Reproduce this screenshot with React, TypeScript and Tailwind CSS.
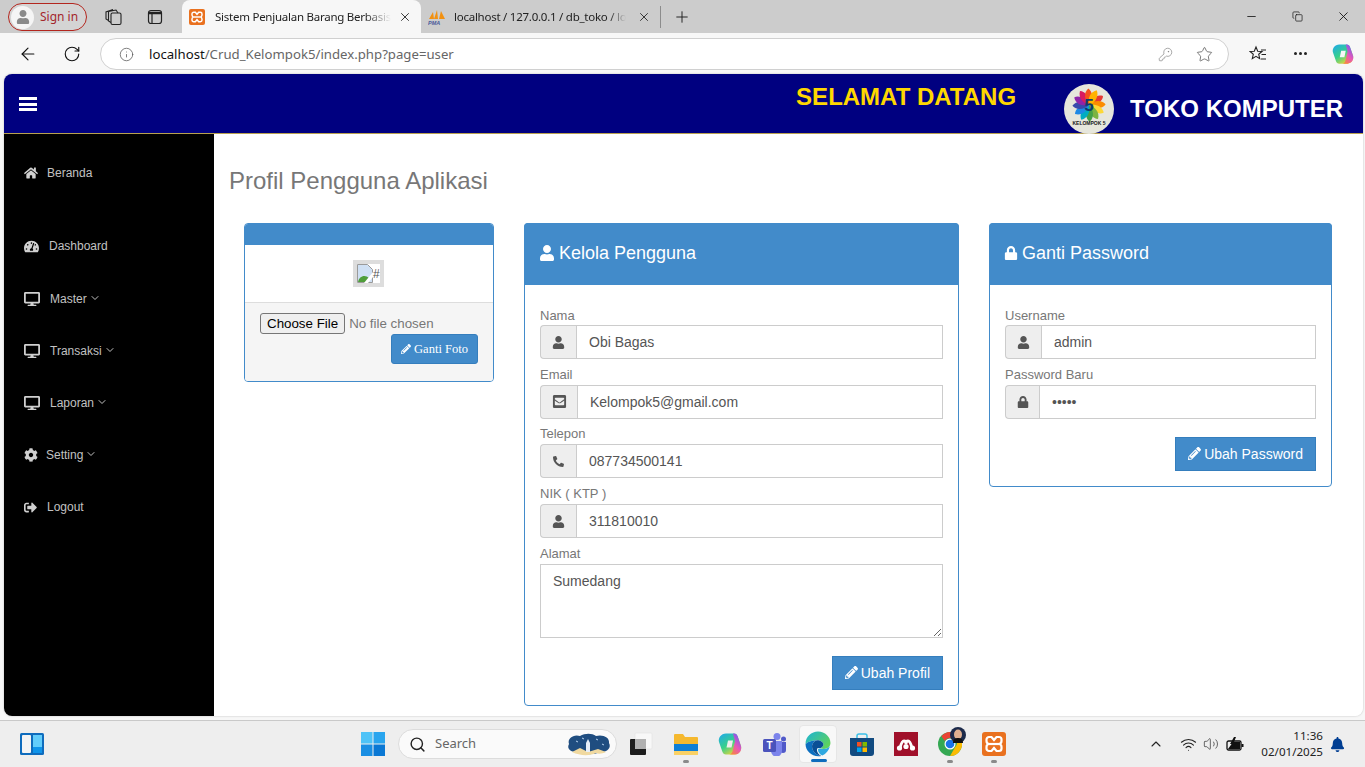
import React from "react";
import {
  ArrowLeft,
  ChevronDown,
  ChevronUp,
  Copy,
  Info,
  KeyRound,
  Minus,
  Plus,
  RotateCw,
  Search,
  Star,
  Volume2,
  Wifi,
  X,
} from "lucide-react";
import {
  FaBell,
  FaCog,
  FaDesktop,
  FaEnvelopeSquare,
  FaHome,
  FaLock,
  FaPencilAlt,
  FaPhone,
  FaSignOutAlt,
  FaTachometerAlt,
  FaUser,
} from "react-icons/fa";

const XamppIcon = ({ size }: { size: number }) => (
  <svg width={size} height={size} viewBox="0 0 24 24">
    <rect width="24" height="24" rx="3" fill="#e9711f" />
    <path
      d="M7 5h2.500L12 8l2.500-3H17a2.500 2.500 0 0 1 2.500 2.500v1.500A3 3 0 0 1 17 12a3 3 0 0 1 2.500 3v1.500A2.500 2.500 0 0 1 17 19h-2.500L12 16l-2.500 3H7a2.500 2.500 0 0 1-2.500-2.500V15A3 3 0 0 1 7 12a3 3 0 0 1-2.500-3V7.500A2.500 2.500 0 0 1 7 5z"
      fill="none"
      stroke="#fff"
      strokeWidth="2.200"
    />
    <path d="M7 12h10" stroke="#fff" strokeWidth="2.200" />
  </svg>
);

const PmaIcon = () => (
  <svg width="18" height="16" viewBox="0 0 18 16">
    <path d="M1 10 5 3l1 7zM6 10l3-9 1 9zM11 10l2-8 4 8z" fill="#f29111" />
    <text x="0" y="15.500" fontSize="5.500" fontWeight="700" fontStyle="italic" fill="#4a5a9a" fontFamily="Liberation Sans, sans-serif">
      PMA
    </text>
  </svg>
);

const CopilotIcon = ({ size, id }: { size: number; id: string }) => (
  <svg width={size} height={size} viewBox="0 0 24 24">
    <defs>
      <linearGradient id={`${id}a`} x1="0" y1="0" x2="0.700" y2="1">
        <stop offset="0" stopColor="#1fa8ee" />
        <stop offset="0.550" stopColor="#37d08a" />
        <stop offset="1" stopColor="#f6d535" />
      </linearGradient>
      <linearGradient id={`${id}b`} x1="0.800" y1="0" x2="0.200" y2="1">
        <stop offset="0" stopColor="#6f5cf2" />
        <stop offset="0.550" stopColor="#e957b6" />
        <stop offset="1" stopColor="#f78a3a" />
      </linearGradient>
    </defs>
    <path
      fillRule="evenodd"
      d="M8 1.500h8c2 0 3 1 3.700 3L23 14c1 4-1.500 8.500-6 8.500H8c-2 0-3-1-3.700-3L1 10C0 6 3 1.500 8 1.500zM10 8.500h5l-1.500 7h-5z"
      fill={`url(#${id}a)`}
    />
    <path d="M15 1.500h1c2 0 3 1 3.700 3L23 14c1 4-1.500 8.500-6 8.500h-6c2 0 3-1.500 3.500-3L17 9.500z" fill={`url(#${id}b)`} />
  </svg>
);

const EdgeIcon = () => (
  <svg width="26" height="26" viewBox="0 0 24 24">
    <defs>
      <linearGradient id="eda" x1="0" y1="0" x2="1" y2="0.700">
        <stop offset="0" stopColor="#1bb3d8" />
        <stop offset="1" stopColor="#5fd35a" />
      </linearGradient>
    </defs>
    <path d="M.5 12C.5 5 6 .5 12 .5c6.500 0 11.500 5 11.500 10.500 0 3.500-3 5.500-6 5.500-2 0-3.500-.5-3.500-.5 2-1 3-2 3-3.500 0-2.500-3-4-5.500-4C7 8.500 3 9.500.5 12z" fill="url(#eda)" />
    <path d="M.5 12C3 9.500 7 8.500 11.500 8.500c-3 .5-5 3-5 6 0 4 3.500 7.500 8.500 8.500C7 24.500.5 19 .5 12z" fill="#0c6fc0" />
    <path d="M6.500 14.500c0-3 2-5.500 5-6 2.500 0 5.500 1.500 5.500 4 0 1.500-1 2.500-3 3.500 0 0-3-1-3 1.500 0 2 1.500 4 4 5.500-5-1-8.500-4.500-8.500-8.500z" fill="#0a4f96" />
    <path d="M17 16.500c2 0 4-.5 6-2.500-1 4-3.500 7-7 8.500-2.500-1-4-3-4-5 0-2.500 3-1 5-1z" fill="#2fa8e0" />
  </svg>
);

const ChromeIcon = () => (
  <svg width="24" height="24" viewBox="0 0 24 24">
    <circle cx="12" cy="12" r="12" fill="#34a853" />
    <path d="M12 0a12 12 0 0 1 10.400 6H12a6 6 0 0 0-5.200 3L3.400 4.300A12 12 0 0 1 12 0z" fill="#ea4335" />
    <path d="M22.400 6A12 12 0 0 1 12 24l5.200-9A6 6 0 0 0 17 6z" fill="#fbbc04" />
    <circle cx="12" cy="12" r="5.500" fill="#fff" />
    <circle cx="12" cy="12" r="4.300" fill="#1a73e8" />
  </svg>
);

const LogoKelompok = () => {
  const colors = ["#e53935", "#fb8c00", "#fdd835", "#7cb342", "#43a047", "#00acc1", "#1e88e5", "#3949ab", "#8e24aa", "#d81b60", "#f4511e", "#ffb300"];
  return (
    <svg width="50" height="50" viewBox="0 0 50 50" className="shrink-0">
      <circle cx="25" cy="25" r="25" fill="#e6e6dc" />
      <g transform="translate(25 21)">
        {colors.map((c, i) => (
          <path key={c} d="M0 0C2-6 7-11 14-9 14-4 7 2 0 0z" fill={c} transform={`rotate(${i * 30})`} />
        ))}
      </g>
      <text x="25" y="27" textAnchor="middle" fontSize="17" fontWeight="700" fill="#0d3c6e" fontFamily="Liberation Sans, sans-serif">
        5
      </text>
      <text x="25" y="41" textAnchor="middle" fontSize="5" fontWeight="700" fill="#1a1a1a" fontFamily="Liberation Sans, sans-serif">
        KELOMPOK 5
      </text>
    </svg>
  );
};

const TabStrip = () => (
  <div className="h-[33px] bg-[#cccccc] flex items-end font-['Noto_Sans',sans-serif] text-xs shrink-0">
    <div className="self-start mt-[3px] ml-[8px] w-[79px] h-[28px] rounded-full border border-[#b3261e] flex items-center gap-[6px] px-[2px] bg-[#d4d4d4]">
      <div className="w-[23px] h-[23px] rounded-full bg-[#f5f5f5] flex items-center justify-center">
        <FaUser className="text-[#8a8a8a] text-[14px]" />
      </div>
      <span className="text-[#a4262c]">Sign in</span>
    </div>
    <div className="self-center w-[52px] flex justify-center">
      <svg width="18" height="18" viewBox="0 0 18 18" fill="none" stroke="#222" strokeWidth="1.100">
        <rect x="7" y="5" width="10" height="11.500" rx="1.500" />
        <path d="M7 14.500 4.500 13V3.500L12 2l2 3M4.500 12.500 2 11V4l7-2.500" />
      </svg>
    </div>
    <div className="self-center w-[32px] flex justify-center">
      <svg width="16" height="16" viewBox="0 0 16 16" fill="none" stroke="#222" strokeWidth="1.200">
        <rect x="1.500" y="1.500" width="13" height="13" rx="2.500" />
        <path d="M1.500 4h13" strokeWidth="2.500" />
        <path d="M5 4v10" />
      </svg>
    </div>
    <div className="ml-[11px] w-[239px] h-[33px] bg-[#f7f7f7] rounded-t-lg flex items-center pl-[7px] pr-[9px]">
      <XamppIcon size={16} />
      <span className="ml-[10px] whitespace-nowrap text-[11.500px] tracking-[-0.250px] text-[#222] [mask-image:linear-gradient(to_right,black_85%,transparent)]">
        Sistem Penjualan Barang Berbasis
      </span>
      <X size={14} strokeWidth={1.500} className="ml-auto text-[#222]" />
    </div>
    <div className="ml-[7px] w-[232px] h-[33px] flex items-center pr-[9px]">
      <PmaIcon />
      <span className="ml-[8px] whitespace-nowrap text-[11.500px] tracking-[-0.250px] text-[#222] [mask-image:linear-gradient(to_right,black_90%,transparent)]">
        localhost / 127.0.0.1 / db_toko / lo
      </span>
      <X size={14} strokeWidth={1.500} className="ml-auto text-[#222]" />
    </div>
    <div className="self-center h-[22px] w-px bg-[#8c8c8c]" />
    <Plus size={18} strokeWidth={1.300} className="self-center ml-[12px] text-[#222]" />
    <div className="ml-auto self-center flex items-center text-[#111]">
      <span className="w-[46px] flex justify-center"><Minus size={13} strokeWidth={1.500} /></span>
      <span className="w-[46px] flex justify-center"><Copy size={11} strokeWidth={1.500} /></span>
      <span className="w-[46px] flex justify-center mr-[-1px]"><X size={15} strokeWidth={1.400} /></span>
    </div>
  </div>
);

const AddressBar = () => (
  <div className="h-[41px] bg-[#f7f7f7] flex items-center font-['Noto_Sans',sans-serif] shrink-0">
    <ArrowLeft size={20} strokeWidth={1.400} className="ml-[18px] text-[#111]" />
    <RotateCw size={18} strokeWidth={1.500} className="ml-[25px] text-[#111]" />
    <div className="ml-[19px] mt-[1px] w-[1129px] h-[32px] rounded-full bg-white border border-[#d0d0d0] flex items-center pl-[18px] pr-[15px]">
      <Info size={15} strokeWidth={1.200} className="text-[#555]" />
      <span className="ml-[15px] mt-[1px] text-[13.200px] text-[#666]">
        <span className="text-[#111]">localhost</span>/Crud_Kelompok5/index.php?page=user
      </span>
      <KeyRound size={15} strokeWidth={1} className="ml-auto text-[#777]" />
      <Star size={17} strokeWidth={1.100} className="ml-[23px] text-[#555]" />
    </div>
    <svg width="18" height="18" viewBox="0 0 18 18" className="ml-[20px]" fill="none" stroke="#222" strokeWidth="1.100">
      <path d="M7 2l1.700 4.200 4.300.3-3.300 2.800 1 4.300L7 11.300 3.300 13.600l1-4.300L1 6.500l4.300-.3z" />
      <path d="M12 5h5M12.500 9.500H17M12 14h5" />
    </svg>
    <span className="ml-[27px] flex gap-[2px]">
      <i className="w-[3px] h-[3px] rounded-full bg-[#222]" />
      <i className="w-[3px] h-[3px] rounded-full bg-[#222]" />
      <i className="w-[3px] h-[3px] rounded-full bg-[#222]" />
    </span>
    <span className="ml-[25px] mt-[1px]"><CopilotIcon size={22} id="cpt" /></span>
  </div>
);

const NavItem = ({ icon, label, gap, caret, className }: { icon: React.ReactNode; label: string; gap: string; caret?: boolean; className?: string }) => (
  <div className={`h-[52px] pl-[20px] flex items-center text-xs text-[#c2c2c2] ${className ?? ""}`}>
    <span className="text-[#d0d0d0] shrink-0">{icon}</span>
    <span className={gap}>{label}</span>
    {caret && <ChevronDown size={12} strokeWidth={2} className="ml-[2px] mt-[-2px]" />}
  </div>
);

const Sidebar = () => (
  <aside className="w-[210px] bg-black pt-[13px] shrink-0">
    <NavItem icon={<FaHome size={14} />} label="Beranda" gap="ml-[9px]" className="mb-[21px]" />
    <NavItem icon={<FaTachometerAlt size={15} />} label="Dashboard" gap="ml-[10px]" className="mb-px" />
    <NavItem icon={<FaDesktop size={16} />} label="Master" gap="ml-[10px]" caret />
    <NavItem icon={<FaDesktop size={16} />} label="Transaksi" gap="ml-[10px]" caret />
    <NavItem icon={<FaDesktop size={16} />} label="Laporan" gap="ml-[10px]" caret />
    <NavItem icon={<FaCog size={14} />} label="Setting" gap="ml-[8px]" caret />
    <NavItem icon={<FaSignOutAlt size={13} />} label="Logout" gap="ml-[10px]" />
  </aside>
);

const Field = ({ label, icon, value, addonWidth, type = "text", first }: { label: string; icon: React.ReactNode; value: string; addonWidth: string; type?: string; first?: boolean }) => (
  <div className={first ? "" : "mt-[5.700px]"}>
    <label className={`block h-[20px] text-[13px] text-[#777] ${first ? "leading-[21px]" : "leading-[19px]"}`}>{label}</label>
    <div className="flex h-[34px]">
      <span className={`${addonWidth} shrink-0 flex items-center justify-center bg-[#eeeeee] border border-[#cccccc] border-r-0 rounded-l text-[#555] text-sm`}>
        {icon}
      </span>
      <input
        type={type}
        defaultValue={value}
        className="flex-1 min-w-0 border border-[#cccccc] bg-white px-[12px] text-sm text-[#555] outline-none"
      />
    </div>
  </div>
);

const CardHeader = ({ icon, title }: { icon: React.ReactNode; title: string }) => (
  <div className="h-[62px] bg-[#428bca] mx-[-1px] mt-[-1px] pb-[2px] rounded-t flex items-center pl-[15px] text-lg text-white gap-[4px]">
    {icon}
    <span>{title}</span>
  </div>
);

const SaveButton = ({ label }: { label: string }) => (
  <div className="flex justify-end mt-[18px]">
    <button className="h-[34px] px-[12px] bg-[#428bca] border border-[#357ebd] text-sm text-white flex items-center gap-[3px]">
      <FaPencilAlt size={13} />
      {label}
    </button>
  </div>
);

const PhotoCard = () => (
  <section className="w-[250px] h-[159px] shrink-0 border border-[#428bca] rounded flex flex-col overflow-hidden">
    <div className="h-[21px] bg-[#428bca]" />
    <div className="h-[57px] flex items-center justify-center pr-[1px]">
      <div className="w-[31px] h-[27px] bg-[#dddddd] p-[4px]">
        <div className="h-full bg-white flex items-center overflow-hidden">
          <svg width="16" height="19" viewBox="0 0 16 19" className="shrink-0">
            <path d="M.5.5h10l5 5v13H.5z" fill="#cfe0f4" stroke="#9a9a9a" />
            <path d="M1 18c1-6 7-8 11-4l-3 4z" fill="#4f9e3a" />
            <path d="M16 8 7 19h4l5-6z" fill="#fff" />
          </svg>
          <span className="text-[12px] leading-none text-[#555]">#</span>
        </div>
      </div>
    </div>
    <div className="flex-1 bg-[#f5f5f5] border-t border-[#dddddd] pt-[10px] pl-[15px] pr-[15px]">
      <input
        type="file"
        className="block w-full h-[21px] text-[13.330px] text-[#777] file:text-black file:bg-[#efefef] file:border file:border-solid file:border-[#767676] file:rounded-[3px] file:h-[21px] file:px-[6px] file:mr-[4px]"
      />
      <div className="flex justify-end">
        <button className="w-[87px] h-[30px] bg-[#428bca] border border-[#357ebd] rounded-[3px] text-white text-[12.500px] font-['Liberation_Serif',serif] flex items-center justify-center gap-[3px]">
          <FaPencilAlt size={10} />
          Ganti Foto
        </button>
      </div>
    </div>
  </section>
);

const ProfileCard = () => (
  <section className="w-[435px] shrink-0 self-start border border-[#428bca] rounded">
    <CardHeader icon={<FaUser size={16} />} title="Kelola Pengguna" />
    <div className="px-[15px] pt-[20px] pb-[15px]">
      <Field first label="Nama" icon={<FaUser size={13} />} value="Obi Bagas" addonWidth="w-[36px]" />
      <Field label="Email" icon={<FaEnvelopeSquare size={15} />} value="Kelompok5@gmail.com" addonWidth="w-[37px]" />
      <Field label="Telepon" icon={<FaPhone size={11} className="scale-x-[-1]" />} value="087734500141" addonWidth="w-[36px]" />
      <Field label="NIK ( KTP )" icon={<FaUser size={13} />} value="311810010" addonWidth="w-[36px]" />
      <div className="mt-[5.700px]">
        <label className="block h-[20px] leading-[19px] text-[13px] text-[#777]">Alamat</label>
        <textarea
          defaultValue="Sumedang"
          className="block w-full h-[74px] border border-[#cccccc] px-[12px] py-[6px] text-sm leading-[20px] text-[#555] outline-none"
        />
      </div>
      <SaveButton label="Ubah Profil" />
    </div>
  </section>
);

const PasswordCard = () => (
  <section className="w-[343px] shrink-0 self-start border border-[#428bca] rounded">
    <CardHeader icon={<FaLock size={14} />} title="Ganti Password" />
    <div className="px-[15px] pt-[20px] pb-[15px]">
      <Field first label="Username" icon={<FaUser size={13} />} value="admin" addonWidth="w-[36px]" />
      <Field label="Password Baru" icon={<FaLock size={12} />} value="admin" addonWidth="w-[34px]" type="password" />
      <SaveButton label="Ubah Password" />
    </div>
  </section>
);

const SiteFrame = () => (
  <div className="flex-1 min-h-0 pl-[4px] pr-[2px] pb-[4px] bg-[#f7f7f7]">
    <div className="h-full rounded-lg overflow-hidden flex flex-col font-['Liberation_Sans',Arial,sans-serif] shadow-[0_0_2px_rgba(0,0,0,0.25)]">
      <header className="h-[60px] bg-[#000080] border-b border-[#b8a050] flex items-start shrink-0">
        <div className="ml-[15px] mt-[23px] w-[18px] flex flex-col gap-[2.500px]">
          <i className="block h-[3px] bg-white" />
          <i className="block h-[3px] bg-white" />
          <i className="block h-[3px] bg-white" />
        </div>
        <div className="ml-auto mt-[9px] mr-[48px] text-2xl leading-[28px] font-bold text-[#ffd700]">SELAMAT DATANG</div>
        <div className="mt-[10px]"><LogoKelompok /></div>
        <div className="ml-[16px] mr-[20px] mt-[21px] text-2xl leading-[28px] font-bold text-white">TOKO KOMPUTER</div>
      </header>
      <div className="flex-1 min-h-0 flex">
        <Sidebar />
        <main className="flex-1 min-w-0 bg-white px-[15px] overflow-hidden">
          <h1 className="pt-[34px] h-[89px] text-2xl leading-[26px] text-[#777]">Profil Pengguna Aplikasi</h1>
          <div className="flex gap-[30px] pl-[15px]">
            <PhotoCard />
            <ProfileCard />
            <PasswordCard />
          </div>
        </main>
      </div>
    </div>
  </div>
);

const TaskItem = ({ children, dot }: { children: React.ReactNode; dot?: boolean }) => (
  <div className="relative w-[44px] h-[46px] flex items-center justify-center shrink-0">
    {children}
    {dot && <span className="absolute bottom-[4px] left-[19px] w-[6px] h-[3px] rounded-full bg-[#8a8a8a]" />}
  </div>
);

const Taskbar = () => (
  <footer className="h-[47px] bg-[#eeeeee] border-t border-[#c9c9c9] flex items-center font-['Noto_Sans',sans-serif] shrink-0">
    <svg width="24" height="22" viewBox="0 0 24 22" className="ml-[20px] shrink-0">
      <rect width="24" height="22" rx="1.500" fill="#0f6cbd" />
      <rect x="2" y="2" width="9" height="18" rx="1" fill="#f4f4f4" />
      <rect x="13" y="2" width="9" height="12" fill="#62cdfb" />
      <rect x="13" y="14" width="9" height="6" fill="#0f94ea" />
    </svg>
    <svg width="24" height="24" viewBox="0 0 24 24" className="ml-[317px] shrink-0">
      <rect x="0" y="0" width="11.500" height="11.500" fill="#4fc3f7" />
      <rect x="12.500" y="0" width="11.500" height="11.500" fill="#29a5ee" />
      <rect x="0" y="12.500" width="11.500" height="11.500" fill="#1a8fe3" />
      <rect x="12.500" y="12.500" width="11.500" height="11.500" fill="#0a78d4" />
    </svg>
    <div className="ml-[13px] w-[219px] h-[30px] rounded-full bg-[#fafafa] border border-[#dcdcdc] flex items-center pl-[10px] pr-[4px] shrink-0">
      <Search size={17} strokeWidth={2} className="text-[#222]" />
      <span className="ml-[9px] text-[13px] text-[#666]">Search</span>
      <svg width="46" height="24" viewBox="0 0 46 24" className="ml-auto">
        <path d="M3 12C1 6 8 2 14 4c5-3 12-3 16 0 6-2 14 1 13 7 3 5-3 10-9 9-6 3-16 3-22 0C6 21 0 17 3 12z" fill="#1f4d80" />
        <path d="M6 20l8-4 8 4 10-3 8 3c-4 2-8 2-10 1-6 3-16 3-24-1z" fill="#f0d9a0" />
        <path d="M20 20v-9l2-4 2 4v9z" fill="#e6eef8" />
        <path d="M30 7l2 1M10 9l2 1M36 12l2 1M16 6l2 1" stroke="#b8d4f0" />
      </svg>
    </div>
    <div className="ml-[3px] flex items-center shrink-0">
      <TaskItem>
        <svg width="24" height="24" viewBox="0 0 24 24" className="ml-[-2px]">
          <rect x="6" y="1" width="17" height="16" rx="1" fill="#f8f8f8" stroke="#ddd" strokeWidth="0.500" />
          <rect x="1" y="7" width="16" height="16" rx="1" fill="#1c1c1c" />
          <rect x="6" y="7" width="11" height="10" fill="#b0b0b0" />
        </svg>
      </TaskItem>
      <TaskItem dot>
        <svg width="24" height="22" viewBox="0 0 24 22">
          <path d="M0 2a1 1 0 0 1 1-1h8l2 3h12a1 1 0 0 1 1 1v16H0z" fill="#f5b82e" />
          <rect x="0" y="11" width="24" height="7" fill="#0f7fd6" />
          <rect x="0" y="18" width="24" height="4" fill="#fad165" />
        </svg>
      </TaskItem>
      <TaskItem><CopilotIcon size={24} id="cpb" /></TaskItem>
      <TaskItem>
        <svg width="25" height="24" viewBox="0 0 25 24">
          <circle cx="15" cy="4.500" r="3.500" fill="#7b83eb" />
          <circle cx="21.500" cy="7" r="2.500" fill="#5059c9" />
          <path d="M17 10h7v8a3 3 0 0 1-6 0z" fill="#5059c9" />
          <path d="M9 9h11v10a5 5 0 0 1-11 0z" fill="#7b83eb" />
          <rect x="1" y="7" width="13" height="13" rx="1.500" fill="#4b53bc" />
          <text x="7.500" y="17" textAnchor="middle" fontSize="10" fontWeight="700" fill="#fff" fontFamily="Liberation Sans, sans-serif">T</text>
        </svg>
      </TaskItem>
      <TaskItem>
        <div className="relative w-[38px] h-[38px] rounded-[4px] bg-[#f8f8f8] border border-[#e6e6e6] flex items-center justify-center">
          <EdgeIcon />
          <span className="absolute bottom-0 left-[11px] w-[16px] h-[3px] rounded-full bg-[#0f6cbd]" />
        </div>
      </TaskItem>
      <TaskItem>
        <svg width="24" height="24" viewBox="0 0 24 24">
          <path d="M7 7V4a2 2 0 0 1 2-2h6a2 2 0 0 1 2 2v3" fill="none" stroke="#3bc0e8" strokeWidth="1.500" />
          <path d="M0 6h24v15a3 3 0 0 1-3 3H3a3 3 0 0 1-3-3z" fill="#114a80" />
          <rect x="7" y="10" width="4.500" height="4.500" fill="#f25022" />
          <rect x="12.500" y="10" width="4.500" height="4.500" fill="#7fba00" />
          <rect x="7" y="15.500" width="4.500" height="4.500" fill="#00a4ef" />
          <rect x="12.500" y="15.500" width="4.500" height="4.500" fill="#ffb900" />
        </svg>
      </TaskItem>
      <TaskItem>
        <svg width="24" height="24" viewBox="0 0 24 24">
          <rect width="24" height="24" fill="#a0102a" />
          <path d="M6 16c1-4 2-7 4-7 1.500 0 2 1.500 2 3 0-1.500.5-3 2-3 2 0 3 3 4 7" fill="none" stroke="#fff" strokeWidth="2.800" />
          <circle cx="5.500" cy="16" r="2.600" fill="#fff" />
          <circle cx="12" cy="14.500" r="2.600" fill="#fff" />
          <circle cx="18.500" cy="16" r="2.600" fill="#fff" />
        </svg>
      </TaskItem>
      <TaskItem dot>
        <ChromeIcon />
        <svg width="16" height="16" viewBox="0 0 16 16" className="absolute top-[6px] left-[22px]">
          <circle cx="8" cy="8" r="8" fill="#1c2a4a" />
          <ellipse cx="8" cy="7.500" rx="4" ry="5" fill="#e0b090" />
          <path d="M3 16c0-4 2-5 5-5s5 1 5 5z" fill="#111" />
        </svg>
      </TaskItem>
      <TaskItem dot><XamppIcon size={24} /></TaskItem>
    </div>
    <ChevronUp size={16} strokeWidth={1.600} className="ml-[132px] text-[#222] shrink-0" />
    <Wifi size={17} strokeWidth={1.500} className="ml-[16px] text-[#222] shrink-0" />
    <Volume2 size={16} strokeWidth={1.100} className="ml-[6px] text-[#333] shrink-0" />
    <svg width="18" height="14" viewBox="0 0 18 14" className="ml-[7px] shrink-0">
      <rect x="1" y="4" width="14" height="9" rx="1.500" fill="none" stroke="#111" strokeWidth="1.300" />
      <rect x="15.500" y="7" width="2" height="3" fill="#111" />
      <path d="M2 12 7 5h7v7z" fill="#111" />
      <path d="M8 0 4 7h3l-1 5 5-7H8l2-5z" fill="#111" />
    </svg>
    <div className="ml-[7px] w-[72px] text-right text-[#222] text-[11.600px] leading-[16px] shrink-0">
      <div>11:36</div>
      <div>02/01/2025</div>
    </div>
    <FaBell size={15} className="ml-[7px] text-[#003e92] shrink-0" />
  </footer>
);

export default function App() {
  return (
    <div className="h-screen w-full overflow-hidden flex flex-col bg-[#f7f7f7]">
      <TabStrip />
      <AddressBar />
      <SiteFrame />
      <Taskbar />
    </div>
  );
}
